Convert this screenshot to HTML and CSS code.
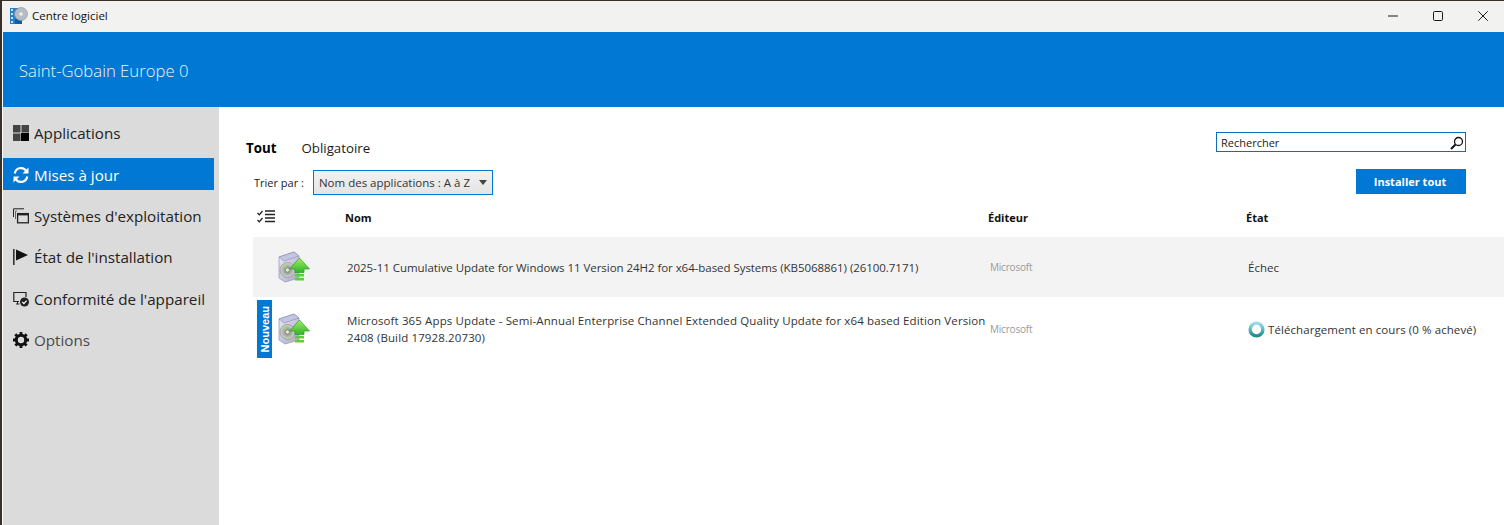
FILE: index.html
```html
<!DOCTYPE html>
<html lang="fr">
<head>
<meta charset="utf-8">
<title>Centre logiciel</title>
<link rel="stylesheet" href="styles.css">
</head>
<body>
<svg class="defs" width="0" height="0" aria-hidden="true">
  <defs>
    <linearGradient id="gBox" x1="0" y1="0" x2="1" y2="1"><stop offset="0" stop-color="#eeeef6"/><stop offset="1" stop-color="#a4a4c4"/></linearGradient>
    <linearGradient id="gArrow" x1="0" y1="0" x2="0" y2="1"><stop offset="0" stop-color="#a4ee62"/><stop offset="1" stop-color="#2fb52a"/></linearGradient>
    <radialGradient id="gDisc"><stop offset="0" stop-color="#f0f0e8"/><stop offset=".35" stop-color="#9a9d98"/><stop offset="1" stop-color="#d4d6d2"/></radialGradient>
    <symbol id="pkg" viewBox="0 0 32 32">
      <path d="M1 6 L16 1 L21 5 L21 27 L7 31 L1 27 Z" fill="url(#gBox)" stroke="#9c9cc0" stroke-width=".8"/>
      <path d="M1 6 L16 1 L21 5 L6 10 Z" fill="#c4c4e4" stroke="#8a8ab0" stroke-width=".6"/>
      <circle cx="9.500" cy="19" r="7.500" fill="url(#gDisc)" stroke="#85858a" stroke-width=".6"/>
      <circle cx="9.500" cy="19" r="2" fill="#e8f0d0" stroke="#6c6c6c" stroke-width=".6"/>
      <path d="M7 13 L9 17 L5 16 Z" fill="#9ad86a"/>
      <path d="M21.500 7 L31.500 18 L26 18 L26 21.500 L17 21.500 L17 18 L11.500 18 Z" fill="url(#gArrow)" stroke="#2f9e2a" stroke-width=".7"/>
      <rect x="17" y="23" width="9" height="2.500" fill="#5fce3a"/>
      <rect x="17" y="27" width="9" height="2.500" fill="#5fce3a"/>
    </symbol>
  </defs>
</svg>
<div class="window">
  <header class="titlebar">
    <svg class="app-icon" viewBox="0 0 18 18" width="18" height="18" aria-hidden="true">
      <rect x="0" y="1" width="11" height="16" fill="#2a7fc9"/>
      <rect x="1" y="2" width="2" height="2" fill="#bfe3ff"/><rect x="1" y="6" width="2" height="2" fill="#bfe3ff"/><rect x="1" y="10" width="2" height="2" fill="#bfe3ff"/><rect x="1" y="14" width="2" height="2" fill="#bfe3ff"/>
      <rect x="5" y="12" width="7" height="5" fill="#0b5fa8"/>
      <circle cx="11" cy="7" r="6.500" fill="#b7bcc2" stroke="#8c8f96" stroke-width=".6"/>
      <circle cx="11" cy="7" r="1.800" fill="#eef1f4"/>
    </svg>
    <span class="app-title">Centre logiciel</span>
    <div class="win-controls">
      <svg viewBox="0 0 10 10" width="10" height="10" aria-hidden="true"><path d="M0 5h10" stroke="#1a1a1a" fill="none"/></svg>
      <svg viewBox="0 0 10 10" width="10" height="10" aria-hidden="true"><rect x=".5" y=".5" width="9" height="9" rx="1.200" stroke="#1a1a1a" fill="none"/></svg>
      <svg viewBox="0 0 10 10" width="10" height="10" aria-hidden="true"><path d="M.3 .3l9.400 9.400M9.700 .3L.3 9.700" stroke="#1a1a1a" fill="none"/></svg>
    </div>
  </header>
  <div class="brand">Saint-Gobain Europe 0</div>
  <div class="main">
    <nav class="sidebar">
      <a class="nav-item">
        <svg class="nav-icon" viewBox="0 0 16 16" aria-hidden="true"><rect x="0" y="0" width="7.500" height="7.500" fill="#444"/><rect x="8.500" y="0" width="7.500" height="7.500" fill="#444"/><rect x="0" y="8.500" width="7.500" height="7.500" fill="#444"/><rect x="8" y="8" width="8" height="8" fill="#000"/></svg>
        Applications</a>
      <a class="nav-item active">
        <svg class="nav-icon" viewBox="0 0 16 16" aria-hidden="true"><path d="M1.800 6.500A6.300 6.300 0 0 1 13 3.500" fill="none" stroke="#fff" stroke-width="2.200"/><path d="M15.500 .5V6.500H9.500Z" fill="#fff"/><path d="M14.200 9.500A6.300 6.300 0 0 1 3 12.500" fill="none" stroke="#fff" stroke-width="2.200"/><path d="M.5 15.500V9.500H6.500Z" fill="#fff"/></svg>
        Mises à jour</a>
      <a class="nav-item">
        <svg class="nav-icon" viewBox="0 0 16 16" aria-hidden="true"><path d="M.5 9V.8H11" fill="none" stroke="#222"/><rect x="4.600" y="5.600" width="10.800" height="9.200" fill="none" stroke="#222" stroke-width="1.300"/><rect x="4.600" y="5" width="10.800" height="2.400" fill="#222"/><path d="M2.500 11V3H4" fill="none" stroke="#666"/></svg>
        Systèmes d'exploitation</a>
      <a class="nav-item">
        <svg class="nav-icon" viewBox="0 0 16 16" aria-hidden="true"><rect x="0" y="0" width="1.600" height="16" fill="#333"/><path d="M3 .5L15 6 3 11.500Z" fill="#111"/></svg>
        État de l'installation</a>
      <a class="nav-item">
        <svg class="nav-icon" viewBox="0 0 16 16" aria-hidden="true"><path d="M6 10.500H.8V1.500H13V6" fill="none" stroke="#222" stroke-width="1.200"/><path d="M3 13H6.500M4.500 11V13" stroke="#222" fill="none"/><circle cx="11.500" cy="11" r="4.500" fill="#222"/><path d="M9.300 11l1.600 1.600 2.700-3" fill="none" stroke="#fff" stroke-width="1.200"/></svg>
        Conformité de l'appareil</a>
      <a class="nav-item muted">
        <svg class="nav-icon" viewBox="0 0 16 16" aria-hidden="true"><circle cx="8" cy="8" r="4.700" fill="none" stroke="#111" stroke-width="3"/><path d="M8 0V16M0 8H16M2.300 2.300L13.700 13.700M13.700 2.300L2.300 13.700" stroke="#111" stroke-width="2.800" stroke-dasharray="3 10 3"/></svg>
        Options</a>
    </nav>
    <section class="content">
      <div class="toolbar">
        <div class="toolbar-left">
          <div class="tabs"><span class="tab selected">Tout</span><span class="tab">Obligatoire</span></div>
          <div class="sort">
            <span class="sort-label">Trier par :</span>
            <div class="select"><span>Nom des applications : A à Z</span><i class="caret"></i></div>
          </div>
        </div>
        <div class="toolbar-right">
          <div class="search"><span>Rechercher</span>
            <svg viewBox="0 0 14 14" width="14" height="14" aria-hidden="true"><circle cx="8.500" cy="5.500" r="4" fill="none" stroke="#111" stroke-width="1.300"/><path d="M5.500 8.500L1 13" stroke="#111" stroke-width="2"/></svg>
          </div>
          <button class="install">Installer tout</button>
        </div>
      </div>
      <div class="row head">
        <div class="cell-check">
          <svg viewBox="0 0 18 14" width="18" height="14" aria-hidden="true"><path d="M.5 3l1.800 1.800L5.500 1M.5 10l1.800 1.800L5.500 8" fill="none" stroke="#222" stroke-width="1.300"/><path d="M8 1h10M8 4.500h10M8 8h10M8 11.500h10" stroke="#222" stroke-width="1.500"/></svg>
        </div>
        <div class="c-name">Nom</div><div class="c-pub">Éditeur</div><div class="c-state">État</div>
      </div>
      <div class="row item alt">
        <div class="cell-icon"><svg class="pkg" width="32" height="32" aria-hidden="true"><use href="#pkg"/></svg></div>
        <div class="c-name">2025-11 Cumulative Update for Windows 11 Version 24H2 for x64-based Systems (KB5068861) (26100.7171)</div>
        <div class="c-pub pub">Microsoft</div>
        <div class="c-state">Échec</div>
      </div>
      <div class="row item second">
        <div class="cell-icon">
          <span class="badge"><span>Nouveau</span></span>
          <svg class="pkg" width="32" height="32" aria-hidden="true"><use href="#pkg"/></svg>
        </div>
        <div class="c-name">Microsoft 365 Apps Update - Semi-Annual Enterprise Channel Extended Quality Update for x64 based Edition Version 2408 (Build 17928.20730)</div>
        <div class="c-pub pub">Microsoft</div>
        <div class="c-state status">
          <svg viewBox="0 0 16 16" width="17" height="17" aria-hidden="true"><defs><linearGradient id="gRing" x1="0" y1="0" x2="0" y2="1"><stop offset="0" stop-color="#9fdcea"/><stop offset="1" stop-color="#1c8f8c"/></linearGradient></defs><circle cx="8" cy="8" r="6" fill="none" stroke="url(#gRing)" stroke-width="3.200"/></svg>
          <span>Téléchargement en cours (0 % achevé)</span>
        </div>
      </div>
    </section>
  </div>
</div>
</body>
</html>
```
FILE: styles.css
```css
* { box-sizing: border-box; }
html, body { margin: 0; height: 100%; }
body {
  background: #3a3028;
  font-family: "Open Sans", "Noto Sans", sans-serif;
  color: #1a1a1a;
  overflow: hidden;
  padding: 1px 0 0 2px;
}
.defs { position: absolute; }
.window { height: 524px; display: flex; flex-direction: column; background: #fff; }
.titlebar {
  height: 31px;
  background: #f2f3f0;
  display: flex;
  align-items: center;
  padding: 0 0 2px 8px;
  flex: none;
}
.app-icon { flex: none; }
.app-title { font-size: 11.500px; margin-left: 4px; color: #111; }
.win-controls { margin-left: auto; display: flex; align-items: center; gap: 35px; padding-right: 16px; }
.brand {
  height: 75px;
  margin-left: 1px;
  background: #0078d4;
  color: #eef6fc;
  font-size: 16.700px;
  font-weight: 300;
  line-height: 78px;
  padding-left: 16px;
  flex: none;
}
.main { flex: 1; display: flex; margin-left: 1px; min-height: 0; }
.sidebar {
  width: 216px;
  background: #dbdbdb;
  padding: 10px 5px 0 0;
  flex: none;
  display: flex;
  flex-direction: column;
  gap: 9.400px;
}
.nav-item {
  height: 32px;
  display: flex;
  align-items: center;
  gap: 5px;
  padding-left: 10px;
  font-size: 15.200px;
  color: #222;
}
.nav-item.active { background: #0078d4; color: #fff; padding-top: 1px; }
.nav-item.muted { color: #4a4a4a; }
.nav-icon { width: 16px; height: 16px; flex: none; }
.content { flex: 1; min-width: 0; padding-top: 25px; display: flex; flex-direction: column; }
.toolbar { display: flex; justify-content: space-between; padding-left: 27px; padding-right: 38px; height: 71px; flex: none; }
.tabs { display: flex; gap: 25px; font-size: 13.300px; line-height: 32px; }
.tab.selected { font-weight: 700; color: #000; }
.sort { display: flex; align-items: center; margin: 6px 0 0 8px; gap: 9px; }
.sort-label { font-size: 11px; color: #222; }
.select {
  width: 180px;
  height: 25px;
  border: 1px solid #0078d4;
  background: linear-gradient(#f2f2f2, #e4e4e4);
  display: flex;
  align-items: center;
  justify-content: space-between;
  padding: 0 5px;
  font-size: 11.500px;
  color: #333;
  white-space: nowrap;
}
.caret { border: 4px solid transparent; border-top: 5px solid #444; border-bottom: 0; }
.toolbar-right { display: flex; flex-direction: column; align-items: flex-end; }
.search {
  width: 250px;
  height: 20px;
  border: 1px solid #0f6cbd;
  display: flex;
  align-items: center;
  justify-content: space-between;
  padding: 1px 1px 0 4px;
  font-size: 11px;
  color: #222;
}
.install {
  margin-top: 17px;
  width: 110px;
  height: 25px;
  border: 0;
  background: #0078d4;
  color: #fff;
  font: 700 11px "Open Sans", sans-serif;
  padding: 0 2px 0 0;
}
.row { display: grid; grid-template-columns: 92px 643px 258px 1fr; margin-left: 34px; align-items: center; }
.row.head { height: 34px; padding-bottom: 6px; font-size: 11px; font-weight: 700; color: #111; flex: none; }
.row.head .cell-check { padding-left: 4px; display: flex; }
.row.item { font-size: 11.500px; color: #333; }
.row.item .c-name { padding-left: 2px; line-height: 17px; letter-spacing: -0.05px; }
.row.second .c-name { letter-spacing: 0.12px; }
.row.item .c-pub { padding-left: 2px; }
.row.item .c-state { padding-left: 2px; }
.row.alt { height: 60px; background: #f3f3f3; }
.row.second { height: 64px; }
.row.item .pub { font-size: 10px; color: #9a9a9a; letter-spacing: -0.2px; }
.cell-icon { position: relative; height: 100%; display: flex; align-items: center; padding-left: 25px; }
.pkg { display: block; }
.badge {
  position: absolute;
  left: 4px;
  top: 3px;
  width: 15px;
  height: 58px;
  background: #0078d4;
  color: #fff;
  font: 700 11px "Liberation Sans", sans-serif;
  display: flex;
  align-items: center;
  justify-content: center;
}
.badge span { writing-mode: vertical-rl; transform: rotate(180deg); }
.status { display: flex; align-items: center; gap: 3px; white-space: nowrap; letter-spacing: 0.08px; }
```
